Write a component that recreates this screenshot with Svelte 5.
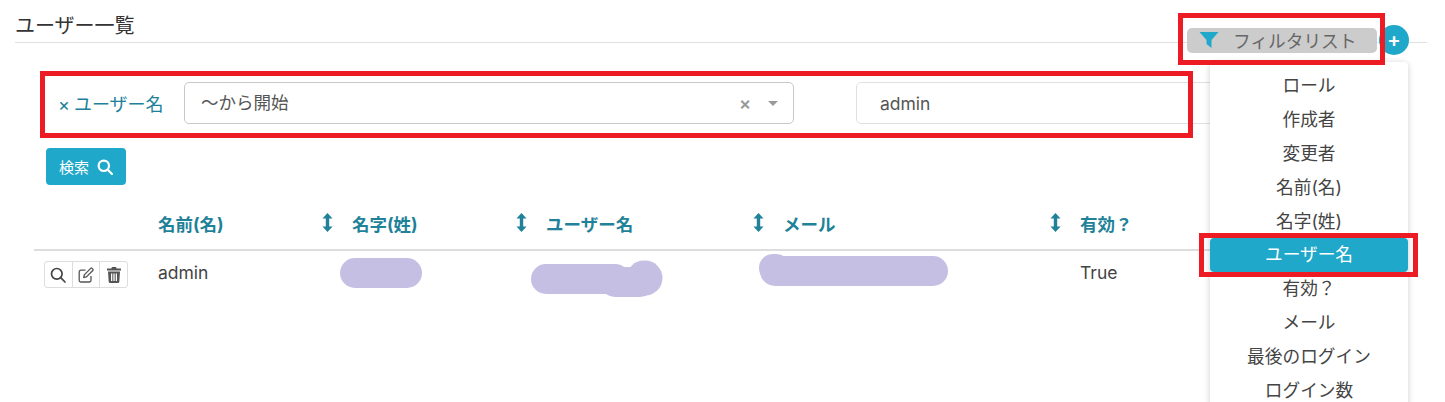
<script>
	const columns = [
		{ label: '名前(名)', sort: true },
		{ label: '名字(姓)', sort: true },
		{ label: 'ユーザー名', sort: true },
		{ label: 'メール', sort: true },
		{ label: '有効？', sort: false }
	];
	const filters = [
		'ロール',
		'作成者',
		'変更者',
		'名前(名)',
		'名字(姓)',
		'ユーザー名',
		'有効？',
		'メール',
		'最後のログイン',
		'ログイン数'
	];
	const selected = 'ユーザー名';
</script>

<div class="page">
	<header class="head">
		<h1>ユーザー一覧</h1>
	</header>

	<div class="filterRow">
		<div class="filterLabel"><span class="remove">×</span>ユーザー名</div>
		<div class="select">
			<span class="value">〜から開始</span>
			<span class="clear">×</span>
			<span class="caret"></span>
		</div>
		<div class="input">admin</div>
	</div>

	<button class="search">
		検索
		<svg width="16" height="16" viewBox="0 0 16 16" fill="none" stroke="#fff" stroke-width="2.2">
			<circle cx="6.8" cy="6.8" r="5.2" />
			<path d="M10.7 10.7 15 15" stroke-linecap="round" />
		</svg>
	</button>

	<div class="table">
		<div class="row headRow">
			<div></div>
			{#each columns as col}
				<div class="th">
					<span>{col.label}</span>
					{#if col.sort}
						<svg width="11" height="19" viewBox="0 0 11 19" fill="#1f8299">
							<path d="M5.500 0 10.500 5.500H7.200v8h3.300L5.500 19 .5 13.500h3.300v-8H.5z" />
						</svg>
					{/if}
				</div>
			{/each}
		</div>
		<div class="row bodyRow">
			<div>
				<div class="actions">
					<span class="action">
						<svg width="16" height="16" viewBox="0 0 16 16" fill="none" stroke="#444" stroke-width="1.7">
							<circle cx="6.8" cy="6.8" r="5.3" />
							<path d="M10.7 10.7 15 15" stroke-linecap="round" />
						</svg>
					</span>
					<span class="action">
						<svg width="16" height="16" viewBox="0 0 16 16" fill="none" stroke="#555" stroke-width="1.3">
							<path d="M13 9v4.200A1.800 1.800 0 0 1 11.200 15H3A1.800 1.800 0 0 1 1.200 13.200V5A1.800 1.800 0 0 1 3 3.200h4.500" />
							<path d="M5.800 10.400 6.300 7.800 12.700 1.400a1 1 0 0 1 1.400 0l.7.700a1 1 0 0 1 0 1.400L8.400 9.900z" />
						</svg>
					</span>
					<span class="action">
						<svg width="14" height="16" viewBox="0 0 14 16" fill="#555">
							<path d="M5 0h4l.7 1.500H14V3.500H0V1.500h4.300z" />
							<path d="M1 4.500h12l-.7 10.200A1.400 1.400 0 0 1 10.900 16H3.100a1.400 1.400 0 0 1-1.400-1.300zM4 6.500v7.500h1.300V6.500zm2.350 0v7.500h1.300V6.500zm2.350 0v7.500H10V6.500z" fill-rule="evenodd" />
						</svg>
					</span>
				</div>
			</div>
			<div class="td">admin</div>
			<div></div>
			<div></div>
			<div></div>
			<div class="td">True</div>
		</div>
	</div>

	<!-- redaction marks painted over the table cells -->
	<svg class="marks" width="1445" height="402" fill="none" stroke="#c5bfe3" stroke-linecap="round">
		<path d="M355 273H407" stroke-width="30" />
		<path d="M546 279H615" stroke-width="30" />
		<path d="M615 282H640" stroke-width="30" />
		<path d="M644 278h1" stroke-width="35" />
		<path d="M773 268H776" stroke-width="28" />
		<path d="M775 271H933" stroke-width="30" />
	</svg>

	<div class="tools">
		<div class="chip">
			<svg width="20" height="16" viewBox="0 0 20 16" fill="#1fa8c9">
				<path d="M.5 0h19L12.500 8v8L7.500 12V8z" />
			</svg>
			<span>フィルタリスト</span>
		</div>
		<div class="plus">+</div>
	</div>

	<ul class="menu">
		{#each filters as item}
			<li class:active={item === selected}>{item}</li>
		{/each}
	</ul>

	<!-- red annotation frames from the screenshot -->
	<div class="frame frameChip"></div>
	<div class="frame frameFilter"></div>
	<div class="frame frameItem"></div>
</div>

<style>
	:global(body) {
		background: #fff;
	}
	.page {
		position: relative;
		width: 1445px;
		height: 402px;
		overflow: hidden;
		background: #fff;
		color: #444;
		font-family: Inter, 'Noto Sans CJK JP', sans-serif;
		font-size: 17.5px;
	}
	.head {
		margin-left: 15px;
		width: 1412px;
		height: 42px;
		border-bottom: 1px solid #e0e0e0;
		box-sizing: content-box;
	}
	h1 {
		margin: 0;
		padding-top: 12px;
		font-size: 20px;
		font-weight: 400;
		line-height: 28px;
		color: #333;
	}
	.filterRow {
		display: flex;
		align-items: center;
		margin: 39px 0 0 58px;
		height: 42px;
	}
	.filterLabel {
		width: 126px;
		font-size: 18px;
		color: #20809a;
		white-space: nowrap;
	}
	.remove {
		margin-right: 4px;
		font-size: 18px;
	}
	.select,
	.input {
		display: flex;
		align-items: center;
		height: 42px;
		box-sizing: border-box;
		border-radius: 5px;
		color: #555;
	}
	.select {
		width: 610px;
		padding: 0 15px 0 16px;
		border: 1px solid #c8c8c8;
		font-size: 17.5px;
	}
	.value {
		flex: 1;
		margin-top: -4px;
	}
	.clear {
		margin-right: 17px;
		color: #999;
		font-size: 18px;
		font-weight: 600;
	}
	.caret {
		border-left: 5px solid transparent;
		border-right: 5px solid transparent;
		border-top: 5px solid #999;
	}
	.input {
		width: 400px;
		margin-left: 62px;
		padding-left: 23px;
		border: 1px solid #e0e0e0;
	}
	.search {
		display: flex;
		align-items: center;
		justify-content: center;
		gap: 8px;
		width: 80px;
		height: 37px;
		margin: 24px 0 0 46px;
		padding: 0;
		border: none;
		border-radius: 4px;
		background: #1fa8c9;
		color: #fff;
		font-family: inherit;
		font-size: 15px;
	}
	.table {
		width: 1374px;
		margin: 20px 0 0 34px;
	}
	.row {
		display: grid;
		grid-template-columns: 124px 194px 194px 237px 297px 1fr;
	}
	.headRow {
		height: 44px;
		border-bottom: 2px solid #ddd;
		font-weight: 700;
		color: #1f8299;
	}
	.th {
		display: flex;
		justify-content: space-between;
		padding: 6px 19px 0 0;
		line-height: 27px;
		white-space: nowrap;
	}
	.th svg {
		margin-top: 2px;
	}
	.bodyRow {
		height: 44px;
	}
	.actions {
		display: flex;
		width: 84px;
		height: 27px;
		margin: 10px 0 0 10px;
		box-sizing: border-box;
		border: 1px solid #ddd;
		border-radius: 3px;
	}
	.action {
		display: flex;
		flex: 1;
		align-items: center;
		justify-content: center;
		border-left: 1px solid #ddd;
	}
	.action:first-child {
		border-left: none;
	}
	.td {
		padding-top: 10px;
		line-height: 24px;
		color: #444;
	}
	.marks {
		position: absolute;
		top: 0;
		left: 0;
	}
	.tools {
		position: absolute;
		top: 25px;
		left: 1187px;
		display: flex;
		align-items: center;
		width: 222px;
	}
	.chip {
		display: flex;
		align-items: center;
		width: 190px;
		height: 25px;
		padding-left: 12px;
		box-sizing: border-box;
		border-radius: 5px;
		background: #ccc;
		color: #666;
		font-size: 17.7px;
	}
	.chip span {
		margin-left: 14px;
		white-space: nowrap;
	}
	.plus {
		display: flex;
		align-items: center;
		justify-content: center;
		width: 30px;
		height: 30px;
		margin-left: 2px;
		border-radius: 50%;
		background: #1fa8c9;
		color: #fff;
		font-size: 20px;
		font-weight: 600;
		line-height: 1;
	}
	.menu {
		position: absolute;
		top: 62px;
		left: 1210px;
		width: 198px;
		margin: 0;
		padding: 7px 0 0;
		list-style: none;
		background: #fff;
		border-radius: 4px;
		box-shadow: 0 1px 6px rgba(0, 0, 0, 0.2);
		text-align: center;
		font-size: 17.7px;
		color: #444;
	}
	.menu li {
		height: 33.9px;
		line-height: 33.9px;
		white-space: nowrap;
	}
	.menu li.active {
		border-radius: 4px;
		background: #1fa8c9;
		color: #fff;
	}
	.frame {
		position: absolute;
		box-sizing: border-box;
		border: 5px solid #ed1c24;
	}
	.frameChip {
		top: 13px;
		left: 1178px;
		width: 207px;
		height: 52px;
	}
	.frameFilter {
		top: 71px;
		left: 40px;
		width: 1153px;
		height: 67px;
	}
	.frameItem {
		top: 233px;
		left: 1199px;
		width: 219px;
		height: 44px;
	}
</style>
